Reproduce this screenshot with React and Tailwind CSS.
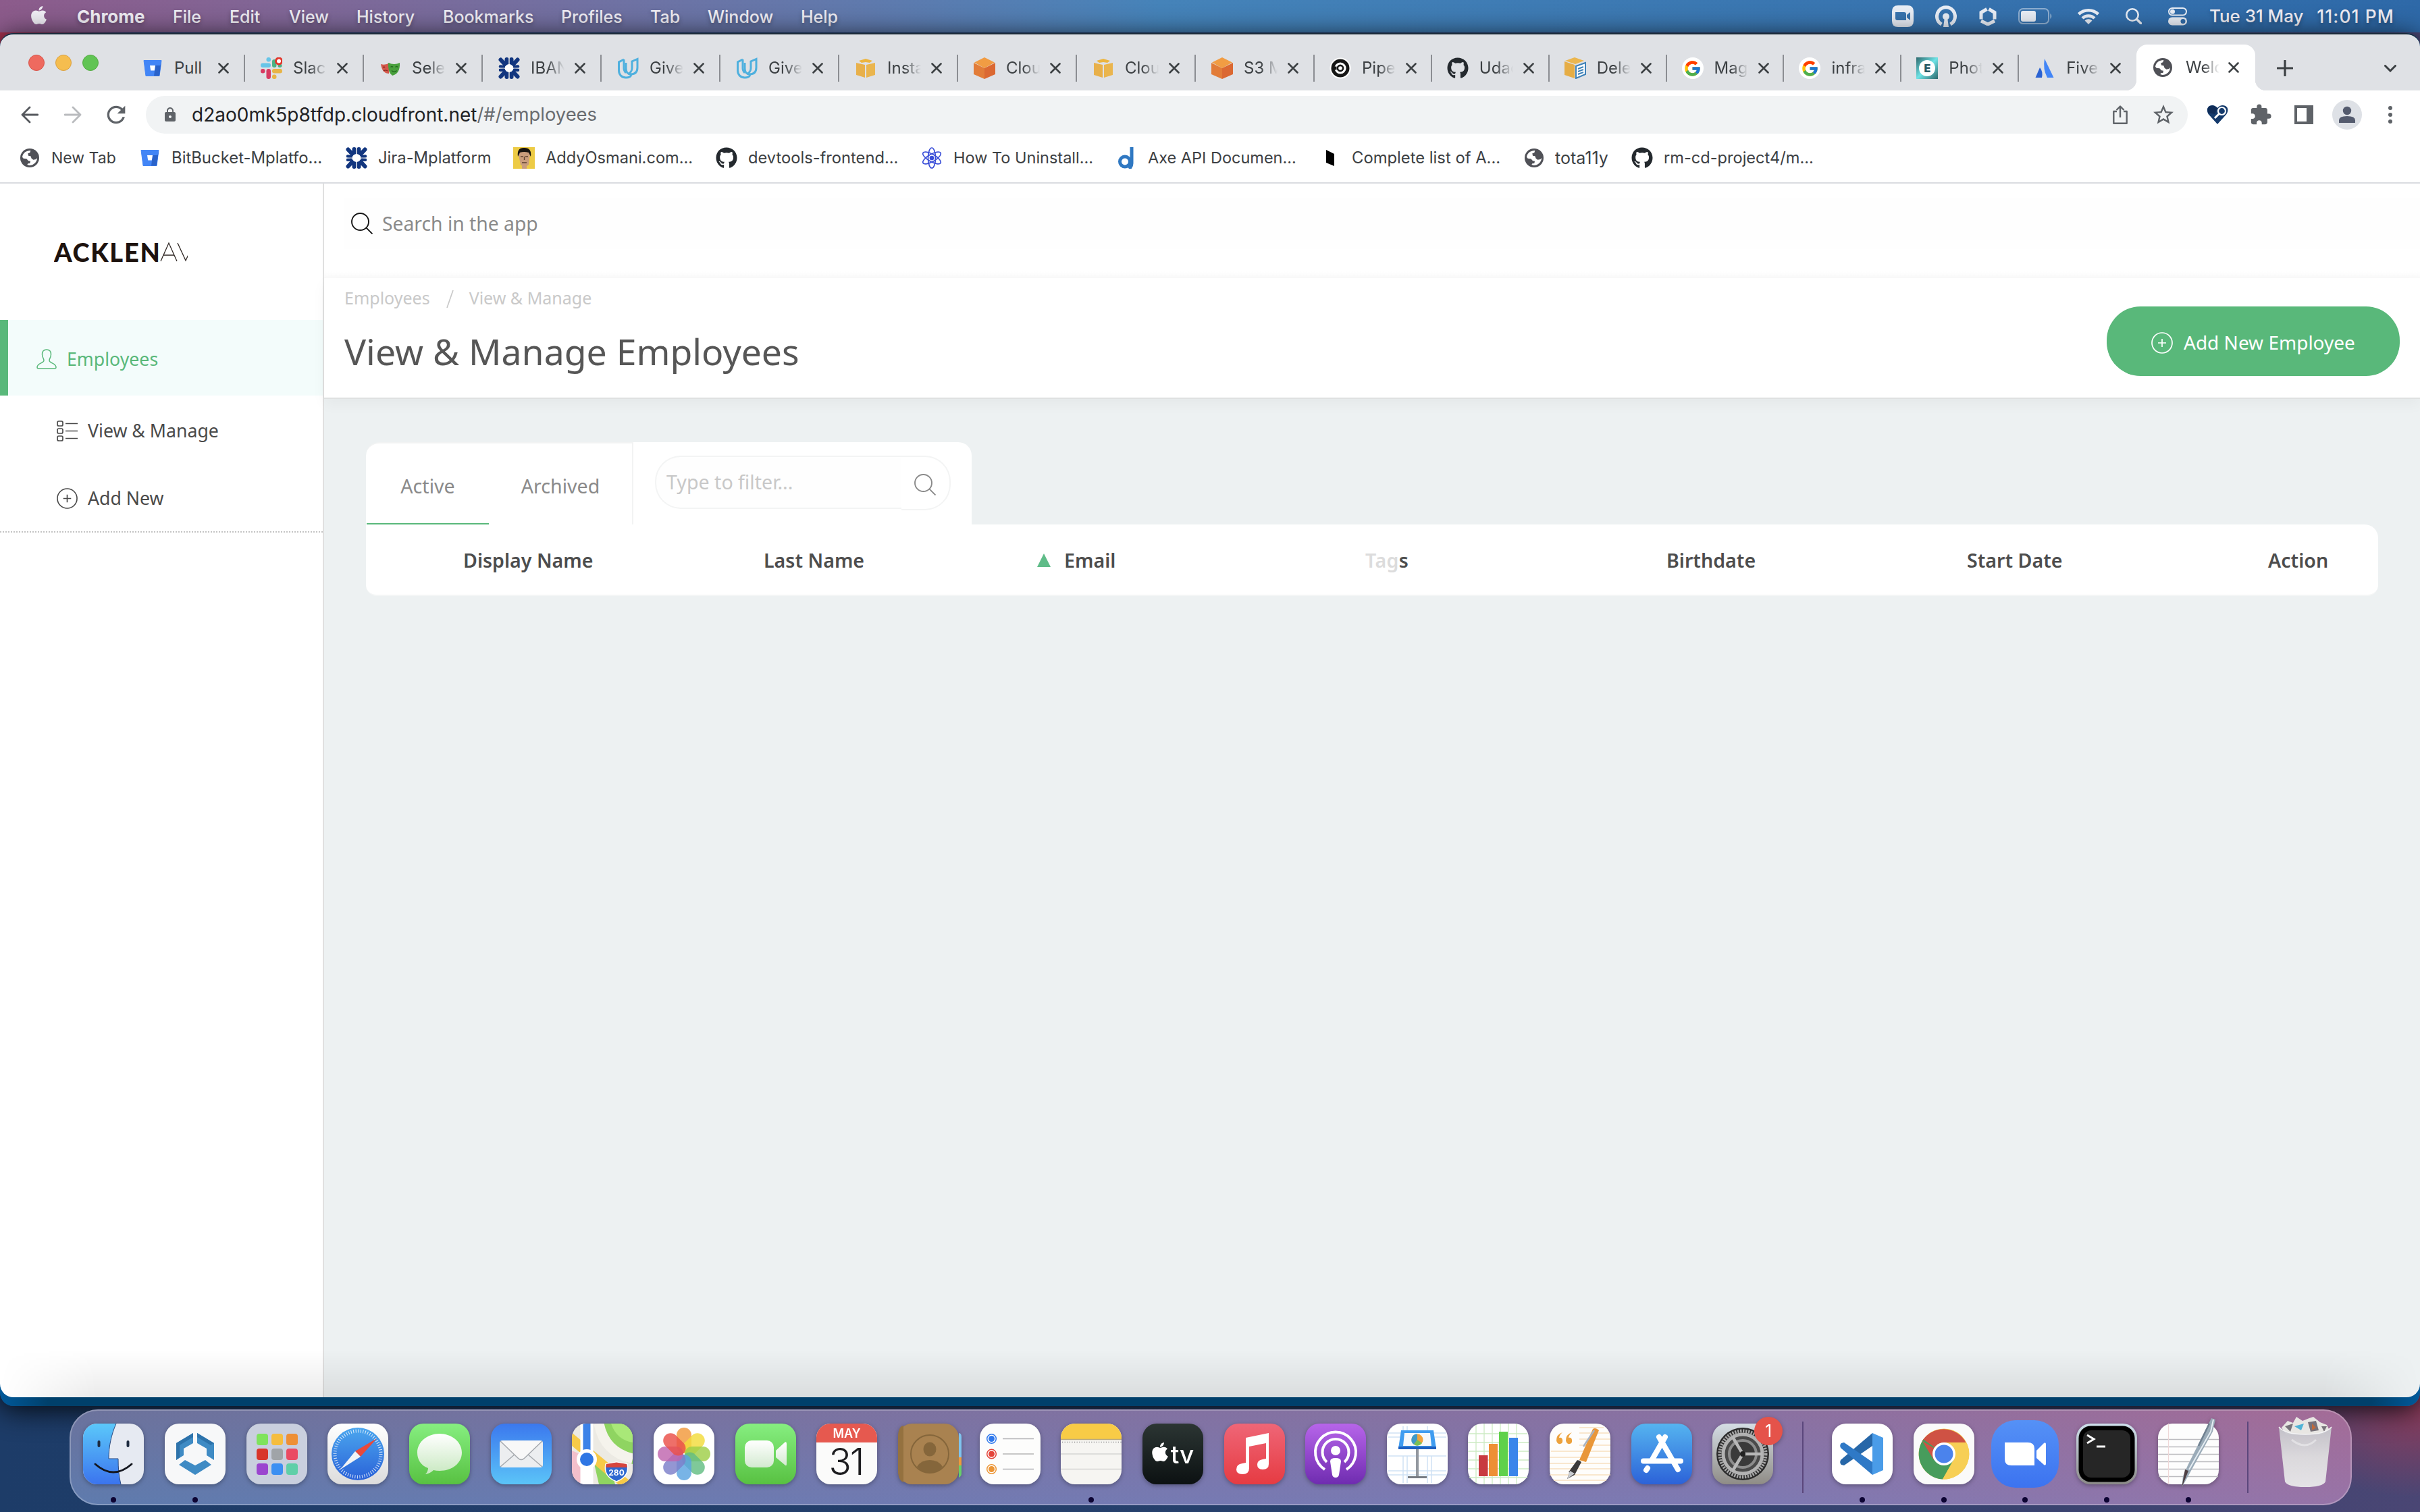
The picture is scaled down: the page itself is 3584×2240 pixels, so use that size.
import React from "react";
import { FaApple, FaGithub } from "react-icons/fa";
import { FcGoogle } from "react-icons/fc";
import { MdExtension, MdStarBorder, MdLock, MdRefresh } from "react-icons/md";

/* ---------- small shared drawings ---------- */

const Lin = ({ id, stops, h }) => (
  <linearGradient id={id} x1="0" y1="0" x2={h ? 1 : 0} y2={h ? 0 : 1}>
    {stops.map((c, i) => (
      <stop key={i} offset={i / (stops.length - 1)} stopColor={c} />
    ))}
  </linearGradient>
);

const Globe = () => (
  <svg viewBox="0 0 84 84" className="size-7 shrink-0">
    <circle cx="42" cy="42" r="42" fill="#505157" />
    <path
      d="M9 38C12 20 26 9 46 9L43 19L34 22L36 32L46 34L50 44L58 50L70 48L75 42C75 60 60 75 40 75L31 72L34 67L43 66L45 56L36 55L28 46L14 44Z"
      fill="#fff"
    />
  </svg>
);

const Bitbucket = () => (
  <svg viewBox="0 0 32 32" className="size-8 shrink-0">
    <path d="M3 4.500H29L26 27.500H6Z" fill="#4285f6" stroke="#4285f6" strokeLinejoin="round" />
    <path d="M29 4.500L26 27.500H18L20 12H27.500Z" fill="#2a62c9" />
    <path d="M12 12H20L18.800 19.500H13.200Z" fill="#fff" />
  </svg>
);

const Slack = () => (
  <svg viewBox="0 0 32 32" className="size-8 shrink-0">
    <g fill="#67c5e8"><rect x="8.500" y="0" width="6.500" height="6.500" rx="3" /><rect x="0" y="8.500" width="15" height="6.500" rx="3.200" /></g>
    <g fill="#4bb385"><rect x="17" y="3" width="6.500" height="12" rx="3.200" /><rect x="25.500" y="9.500" width="6" height="5.500" rx="2.700" /></g>
    <g fill="#d83a62"><rect x="8.500" y="17" width="6.500" height="15" rx="3.200" /><rect x="0" y="17" width="6.500" height="6.500" rx="3" /></g>
    <g fill="#e8b446"><rect x="17" y="17" width="15" height="6.500" rx="3.200" /><rect x="17" y="25.500" width="6.500" height="6.500" rx="3" /></g>
    <circle cx="27" cy="5.500" r="4.500" fill="#fff" stroke="#e2362c" strokeWidth="3" />
  </svg>
);

const Masks = () => (
  <svg viewBox="0 0 32 32" className="size-8 shrink-0">
    <path d="M2 10Q9 12 15 8L14 24Q4 24 2 10Z" fill="#d3584b" />
    <path d="M13 8Q22 12 30 8Q31 24 19 27Q12 22 13 8Z" fill="#49a03d" />
    <path d="M16.500 14.500q2-2 3.500 0M23.500 14.500q2-2 3.500 0M18 19.500q4 4 7.500 0" fill="none" stroke="#256b20" strokeWidth="1.300" />
    <path d="M5 15q2-2 3 0M6 20q3-2 6 0" fill="none" stroke="#7d241c" strokeWidth="1.200" />
  </svg>
);

const Burst = () => (
  <svg viewBox="0 0 32 32" className="size-8 shrink-0">
    <g stroke="#12367f" strokeWidth="6" strokeLinecap="round">
      <path d="M12.500 3V9M19.500 3V9M12.500 29V23M19.500 29V23M3.500 3.500L9.500 10M28.500 3.500L22.500 10M3.500 28.500L9.500 22M28.500 28.500L22.500 22" />
      <path d="M3 13.500L8 14M3 18.800L8 18.500M29 13.500L24 14M29 18.800L24 18.500" strokeWidth="4.500" />
    </g>
    <path d="M0 16H32M16 0V32" stroke="#dfe1e5" strokeWidth="1" />
    <circle cx="16" cy="16" r="6" fill="#fff" />
  </svg>
);

const Udacity = () => (
  <svg viewBox="0 0 32 32" className="size-8 shrink-0" fill="none" stroke="#4fb0de" strokeWidth="3">
    <path d="M10 3L2.500 7V19C2.500 26 7 30 13 30C17 30 20 28.500 21 26" />
    <path d="M13 8V16C13 22 16 25 20 25C27 25 30 21 30 15V2.500L22 6V16C22 20 19 23 17 24" />
    <path d="M10 3V16C10 19 11 21 13 23" />
  </svg>
);

const YellowBox = () => (
  <svg viewBox="0 0 32 32" className="size-8 shrink-0">
    <path d="M6 5L16 2L26 5L22 8L16 7L10 8Z" fill="#edb53f" />
    <path d="M2 8L15 11V30L2 26Z" fill="#e8b04a" />
    <path d="M30 8L17 11V30L30 26Z" fill="#eab54e" />
  </svg>
);

const OrangeCube = () => (
  <svg viewBox="0 0 32 32" className="size-8 shrink-0">
    <path d="M16 0L31 7.500L16 16L1 7.500Z" fill="#f19c43" />
    <path d="M0 8L16 16V32L0 25Z" fill="#e27c38" />
    <path d="M32 8L16 16V32L32 25Z" fill="#db6832" />
  </svg>
);

const Circle = () => (
  <svg viewBox="0 0 32 32" className="size-8 shrink-0">
    <circle cx="16" cy="16" r="15.500" fill="#fff" />
    <circle cx="16" cy="16" r="13.500" fill="#161616" />
    <circle cx="16" cy="16" r="7" fill="none" stroke="#fff" strokeWidth="3.200" />
    <circle cx="16" cy="16" r="2.800" fill="#fff" />
    <rect x="3" y="13.500" width="7.500" height="5" fill="#161616" />
  </svg>
);

const DocCube = () => (
  <svg viewBox="0 0 32 32" className="size-8 shrink-0">
    <path d="M15 0L29 5L16 10L1 5Z" fill="#ebb64f" />
    <path d="M0 6L15 11V31L0 26Z" fill="#e6ad45" />
    <path d="M17 13L31 8V25L17 31Z" fill="#fff" stroke="#3f82b8" strokeWidth="2" />
    <path d="M20 17L28 14M20 21L28 18M20 25L28 22" stroke="#3f82b8" strokeWidth="2" />
  </svg>
);

const GoogleIcon = () => (
  <span className="flex size-8 shrink-0 items-center justify-center rounded-full bg-white">
    <FcGoogle className="size-[27px]" />
  </span>
);

const Edition = () => (
  <span className="flex size-8 shrink-0 items-center justify-center bg-linear-to-br from-[#2f6a6e] via-[#6fe3e6] to-[#2f6a6e]">
    <span className="flex size-6 items-center justify-center rounded-full bg-white text-base font-black leading-none text-[#2a5a63]">E</span>
  </span>
);

const Atlas = () => (
  <svg viewBox="0 0 32 32" className="size-8 shrink-0">
    <path d="M9 15Q14 21 12 30H2.500Z" fill="#2a62d2" />
    <path d="M16 2L29.500 30H20Q13 17 16 2Z" fill="#4285f6" />
  </svg>
);

const Face = () => (
  <svg viewBox="0 0 32 32" className="size-8 shrink-0">
    <path d="M0 0H32V32H0Z" fill="#edcb45" />
    <path d="M8 11Q8 1 16.500 1Q25 1 25 11L23 26Q17 32 11 26Z" fill="#c99c7c" />
    <path d="M7 14Q5 1 16 1Q28 1 26 14L23 8Q16 6 10 8Z" fill="#171310" />
    <path d="M11 14H15M18 14H22M13 23H20M16.500 14V19" stroke="#5c4030" strokeWidth="1.400" />
    <path d="M13 28H20V32H13Z" fill="#c99c7c" />
  </svg>
);

const Atom = () => (
  <svg viewBox="0 0 32 32" className="size-8 shrink-0" fill="none" stroke="#3b4fd8" strokeWidth="1.700">
    <ellipse cx="16" cy="16" rx="5.500" ry="15" />
    <ellipse cx="16" cy="16" rx="5.500" ry="15" transform="rotate(60 16 16)" />
    <ellipse cx="16" cy="16" rx="5.500" ry="15" transform="rotate(120 16 16)" />
    <circle cx="16" cy="16" r="2.500" fill="#3b4fd8" />
  </svg>
);

const Deque = () => (
  <svg viewBox="0 0 32 32" className="size-8 shrink-0" fill="none" stroke="#2f78c2" strokeWidth="5">
    <circle cx="14" cy="21.500" r="7.500" />
    <path d="M24 0V24Q24 29 20 32" />
  </svg>
);

const Slab = () => (
  <svg viewBox="0 0 32 32" className="size-8 shrink-0">
    <path d="M10 4L22 10V28L10 23Z" fill="#000" />
  </svg>
);

const Hub = () => <FaGithub className="size-8 shrink-0 text-[#24292e]" />;

const Cross = () => (
  <svg viewBox="0 0 16 16" className="size-4 shrink-0" stroke="#3c4043" strokeWidth="2.600" strokeLinecap="round">
    <path d="M1.500 1.500L14.500 14.500M14.500 1.500L1.500 14.500" />
  </svg>
);

const Magnifier = ({ className }) => (
  <svg viewBox="0 0 32 32" className={className} fill="none" stroke="currentColor" strokeWidth="1.900">
    <circle cx="13.500" cy="13.500" r="12.500" />
    <path d="M22.300 22.300L31.500 31.500" />
  </svg>
);

const PlusRing = ({ className }) => (
  <svg viewBox="0 0 32 32" className={className} fill="none" stroke="currentColor" strokeWidth="1.700">
    <circle cx="16" cy="16" r="15" />
    <path d="M16 10V22M10 16H22" />
  </svg>
);

/* ---------- menu bar ---------- */

const MENUS = [
  ["Chrome", "w-[142px] font-bold text-[26px]"],
  ["File", "w-[84px]"],
  ["Edit", "w-[88px]"],
  ["View", "w-[100px]"],
  ["History", "w-[128px]"],
  ["Bookmarks", "w-[175px]"],
  ["Profiles", "w-[132px]"],
  ["Tab", "w-[85px]"],
  ["Window", "w-[138px]"],
  ["Help", "w-[80px]"],
];

const MenuBar = () => (
  <header className="flex h-12 shrink-0 items-center bg-linear-to-r from-[#8c5b8b] from-0% via-[#4583b9] via-48% to-[#2e69a8] pl-[42px] pr-[38px] text-[25px] font-medium leading-none text-[#f1eff6] [text-shadow:0_3px_6px_rgba(0,0,0,.3)]">
    <FaApple className="mb-1 size-[31px] shrink-0" />
    <nav className="ml-[41px] flex flex-1 items-baseline pt-0.5">
      {MENUS.map(([t, c]) => (
        <span key={t} className={c}>{t}</span>
      ))}
    </nav>
    <svg viewBox="0 0 32 32" className="size-8">
      <path fillRule="evenodd" d="M9 0H23Q32 0 32 9V23Q32 32 23 32H9Q0 32 0 23V9Q0 0 9 0ZM5 12V19Q5 22 8 22H21V13Q21 10 18 10H5ZM22 14V18L27 22V10Z" fill="#e9eef6" />
    </svg>
    <svg viewBox="0 0 32 32" className="ml-8 size-8" fill="none" stroke="#e9eef6">
      <path d="M9.500 28A13.500 13.500 0 1 1 22.500 28" strokeWidth="5" />
      <circle cx="16" cy="16.500" r="5" fill="#e9eef6" stroke="none" />
      <path d="M14 18H18L20 32H12Z" fill="#e9eef6" stroke="none" />
    </svg>
    <svg viewBox="0 0 26 27" className="ml-[33px] h-[27px] w-[26px]" fill="none" stroke="#e9eef6" strokeWidth="5">
      <path d="M11.500 2.500L3 7.500V17.500M14.500 2.500L23 7.500V17.500M3 20L13 25L23 20" />
    </svg>
    <svg viewBox="0 0 51 24" className="ml-8 h-6 w-[51px]">
      <rect x="1" y="1" width="44" height="22" rx="6" fill="none" stroke="#e9eef6" strokeOpacity=".5" strokeWidth="2" />
      <rect x="4" y="4" width="22" height="16" rx="3" fill="#e9eef6" />
      <path d="M47.500 8Q51 12 47.500 16Z" fill="#e9eef6" opacity=".6" />
    </svg>
    <svg viewBox="0 0 34 24" className="ml-9 h-6 w-[34px]" fill="none" stroke="#e9eef6" strokeWidth="4.500">
      <path d="M2.500 9A21 21 0 0 1 31.500 9M8 15A13 13 0 0 1 26 15" />
      <path d="M11.500 18.500Q17 14 22.500 18.500L17 24Z" fill="#e9eef6" stroke="none" />
    </svg>
    <svg viewBox="0 0 24 24" className="ml-[38px] size-6" fill="none" stroke="#e9eef6" strokeWidth="2.600" strokeLinecap="round">
      <circle cx="10" cy="10" r="8.700" />
      <path d="M16.500 16.500L22.500 22.500" strokeWidth="3.500" />
    </svg>
    <svg viewBox="0 0 28 27" className="ml-[39px] h-[27px] w-7">
      <rect x="1" y="1" width="26" height="10.500" rx="5.200" fill="none" stroke="#e9eef6" strokeWidth="2" />
      <circle cx="6.500" cy="6.200" r="3.500" fill="#e9eef6" />
      <rect y="14.500" width="28" height="12" rx="6" fill="#e9eef6" />
      <circle cx="22" cy="20.500" r="3.500" fill="#2f6aa8" />
    </svg>
    <span className="ml-[33px] w-[155px] text-[25.900px]">Tue 31 May</span>
    <span className="w-[119px] text-right text-[26.400px] tracking-[1.100px]">11:01 PM</span>
  </header>
);

/* ---------- browser chrome ---------- */

const TABS = [
  [Bitbucket, "Pull"],
  [Slack, "Slack"],
  [Masks, "Selen"],
  [Burst, "IBAN"],
  [Udacity, "Give"],
  [Udacity, "Give"],
  [YellowBox, "Insta"],
  [OrangeCube, "Cloud"],
  [YellowBox, "Cloud"],
  [OrangeCube, "S3 M"],
  [Circle, "Pipel"],
  [Hub, "Udac"],
  [DocCube, "Delet"],
  [GoogleIcon, "Mag"],
  [GoogleIcon, "infras"],
  [Edition, "Phot"],
  [Atlas, "Five"],
];

const TabLabel = ({ children }) => (
  <span className="ml-4 w-[50px] shrink-0 overflow-hidden whitespace-nowrap mask-[linear-gradient(to_right,black_50%,transparent)]">{children}</span>
);

const TabStrip = () => (
  <div className="flex h-[83px] shrink-0 bg-[#dfe1e5] text-2xl leading-8 text-[#3c4043]">
    <div className="flex w-[187px] shrink-0 gap-4 pl-[42px] pt-[30px]">
      <i className="size-6 rounded-full border border-[#d8554b] bg-[#ee6a5f]" />
      <i className="size-6 rounded-full border border-[#dba142] bg-[#f5bd4f]" />
      <i className="size-6 rounded-full border border-[#56ab45] bg-[#61c454]" />
    </div>
    {TABS.map(([Icon, label], i) => (
      <div key={i} className={"mt-[30px] flex h-10 shrink-0 items-center " + (i < 10 ? "w-[176px] pl-[23px]" : "w-[173.860px] pl-[22px]") + (i < 16 ? " border-r-2 border-[#8b8d92]" : "")}>
        <Icon />
        {label === "Pull" ? <span className="ml-4 w-[50px]">Pull</span> : <TabLabel>{label}</TabLabel>}
        <span className="ml-[15px]"><Cross /></span>
      </div>
    ))}
    <div className="relative mt-[15px] flex h-[68px] w-[176px] shrink-0 items-center rounded-t-2xl bg-white pl-[25px]">
      <i className="absolute -left-4 bottom-0 size-4 bg-[radial-gradient(circle_at_0_0,transparent_16px,white_16.500px)]" />
      <i className="absolute -right-4 bottom-0 size-4 bg-[radial-gradient(circle_at_100%_0,transparent_16px,white_16.500px)]" />
      <Globe />
      <span className="ml-[20px] w-[50px] overflow-hidden mask-[linear-gradient(to_right,black_50%,transparent)]">Welc</span>
      <span className="ml-[13px]"><Cross /></span>
    </div>
    <svg viewBox="0 0 24 24" className="ml-8 mt-[38px] size-6" stroke="#3c4043" strokeWidth="3.200" strokeLinecap="round">
      <path d="M12 1V23M1 12H23" />
    </svg>
    <svg viewBox="0 0 18 11" className="ml-[135px] mt-[45px] h-[11px] w-[18px]" fill="none" stroke="#3c4043" strokeWidth="3" strokeLinecap="round">
      <path d="M1.500 1.500L9 9L16.500 1.500" />
    </svg>
  </div>
);

const Toolbar = () => (
  <div className="flex h-[72px] shrink-0 items-center bg-white pl-[31px] text-[#5f6368]">
    <svg viewBox="0 0 26 26" className="size-[26px]" fill="none" stroke="#55585d" strokeWidth="2.800" strokeLinecap="round" strokeLinejoin="round">
      <path d="M25 13H2M13 2L2 13L13 24" />
    </svg>
    <svg viewBox="0 0 26 26" className="ml-[38px] size-[26px]" fill="none" stroke="#b9bbbe" strokeWidth="2.800" strokeLinecap="round" strokeLinejoin="round">
      <path d="M1 13H24M13 2L24 13L13 24" />
    </svg>
    <MdRefresh className="ml-[31px] size-10" />
    <div className="ml-[24px] flex h-14 w-[3024px] items-center rounded-full bg-[#f1f3f4] pl-[24px] pr-[18px]">
      <MdLock className="size-6 text-[#5f6368]" />
      <span className="ml-[20px] text-[28px] leading-none text-[#202124]">d2ao0mk5p8tfdp.cloudfront.net</span>
      <span className="flex-1 text-[27.400px] leading-none text-[#696c70]">/#/employees</span>
      <svg viewBox="0 0 22 28" className="h-7 w-[22px]" fill="none" stroke="#5f6368" strokeWidth="2.400" strokeLinejoin="round">
        <path d="M6 9H1.300V26.700H20.700V9H16M11 18V2M5.500 7L11 1.500L16.500 7" />
      </svg>
      <MdStarBorder className="ml-[35px] size-9" />
    </div>
    <svg viewBox="0 0 32 30" className="ml-7 h-[30px] w-8">
      <path d="M16 29L2.500 14Q-1.500 6 4 2Q11-1 16 5Q21-1 28 2Q34 6 29.500 14Z" fill="#143a6c" />
      <path d="M12 14L2 12Q0 4 5 2Q11 0 16 5Z" fill="#0f2c58" />
      <circle cx="22.500" cy="9.500" r="5.500" fill="none" stroke="#fff" strokeWidth="2.200" />
      <path d="M18.500 13.500L12 20" stroke="#fff" strokeWidth="3" />
    </svg>
    <MdExtension className="ml-[31px] size-[34px]" />
    <svg viewBox="0 0 28 28" className="ml-[33px] size-7">
      <path fillRule="evenodd" d="M0 0H28V28H0ZM4 4V24H18V4Z" fill="#5f6368" />
    </svg>
    <svg viewBox="0 0 44 44" className="ml-7 size-11">
      <circle cx="22" cy="22" r="22" fill="#dee1e6" />
      <circle cx="22" cy="16" r="6.200" fill="#545b6e" />
      <path d="M10 34V30Q10 24 22 24Q34 24 34 30V34Z" fill="#545b6e" />
    </svg>
    <svg viewBox="0 0 8 28" className="ml-[38px] h-7 w-2" fill="#5f6368">
      <circle cx="4" cy="4" r="3" /><circle cx="4" cy="14" r="3" /><circle cx="4" cy="24" r="3" />
    </svg>
  </div>
);

const BOOKMARKS = [
  [Globe, "New Tab", "w-[178px] pl-0.5", "ml-[18px] text-[23px]"],
  [Bitbucket, "BitBucket-Mplatfo...", "w-[306px]", "ml-4 text-[23.900px]"],
  [Burst, "Jira-Mplatform", "w-[248px]", "ml-4 text-[23.800px]"],
  [Face, "AddyOsmani.com...", "w-[300px]", "ml-4 text-[23.600px]"],
  [Hub, "devtools-frontend...", "w-[304px]", "ml-4 text-[23.700px]"],
  [Atom, "How To Uninstall...", "w-[288px]", "ml-4 text-[23.500px]"],
  [Deque, "Axe API Documen...", "w-[302px]", "ml-4 text-[23.500px]"],
  [Slab, "Complete list of A...", "w-[302px]", "ml-4 text-[23.800px]"],
  [Globe, "tota11y", "w-[160px] pl-0.5", "ml-[17px] text-[25px]"],
  [Hub, "rm-cd-project4/m...", "w-[320px]", "ml-4 text-[23.600px]"],
];

const BookmarksBar = () => (
  <div className="flex h-[66px] shrink-0 items-start border-b-2 border-[#dadce0] bg-white pl-7 pt-[12px] leading-8 text-[#3c4043]">
    {BOOKMARKS.map(([Icon, label, w, t]) => (
      <div key={label} className={"flex h-8 shrink-0 items-center whitespace-nowrap " + w}>
        <Icon />
        <span className={t}>{label}</span>
      </div>
    ))}
  </div>
);

/* ---------- web page ---------- */

const Sidebar = () => (
  <aside className="flex w-[480px] shrink-0 flex-col border-r-2 border-[#e0e0e0] bg-white text-[26.700px] text-[#4a4a4a]">
    <div className="flex h-[202px] items-center pl-[80px]">
      <div className="flex w-[198px] items-center overflow-hidden whitespace-nowrap font-['Lato'] text-[38px] leading-none text-[#1d120e]">
        <span className="font-black tracking-[1.700px]">ACKLEN</span>
        <svg viewBox="0 0 44 28" className="-ml-0.5 h-7 w-11 shrink-0 overflow-visible" fill="none" stroke="#2e2623" strokeWidth="1.300">
          <path d="M1 28L13 1L25 28M5 19H21M26 1L38 27L50 1" />
        </svg>
      </div>
    </div>
    <div className="flex h-[112px] items-center border-l-[12px] border-[#59b87a] bg-[#f3fcfb] pl-[42px] text-[#59b87a]">
      <svg viewBox="0 0 30 30" className="mt-1 size-[30px]" fill="none" stroke="currentColor" strokeWidth="1.500">
        <path d="M15 1C10.500 1 8.500 4 8.500 8C8.500 13 11 14 11 17C11 21 1 21 1 27Q1 29 3 29H27Q29 29 29 27C29 21 19 21 19 17C19 14 21.500 13 21.500 8C21.500 4 19.500 1 15 1Z" />
      </svg>
      <span className="ml-[15px] pt-1">Employees</span>
    </div>
    <div className="flex h-[102px] items-center pl-[84px]">
      <svg viewBox="0 0 31 31" className="mt-0.5 size-[31px]" fill="none" stroke="currentColor" strokeWidth="1.700">
        <rect x="1" y="1" width="8" height="7" rx="2" /><rect x="1" y="12" width="8" height="7" rx="2" /><rect x="1" y="23" width="8" height="7" rx="2" />
        <path d="M13 4.500H31M13 15.500H31M13 26.500H31" />
      </svg>
      <span className="ml-[15px] pt-0.5">View &amp; Manage</span>
    </div>
    <div className="flex h-[101px] items-center border-b-2 border-dotted border-[#c4c4c4] pl-[84px]">
      <PlusRing className="mt-0.5 size-[31px]" />
      <span className="ml-[15px] pt-0.5">Add New</span>
    </div>
  </aside>
);

const PageHeader = () => (
  <div className="flex h-[179px] shrink-0 justify-between border-b-2 border-[#dfe1e1] bg-white pl-[30px] pr-[30px] shadow-[0_8px_20px_rgba(0,0,0,.04)]">
    <div>
      <div className="mt-3 flex text-[25px] leading-[34px] text-[#c9c9c9]">
        <span>Employees</span>
        <svg viewBox="0 0 11 26" className="ml-[24px] mt-1.5 h-[26px] w-[11px]" stroke="#c9c9c9" strokeWidth="1.700"><path d="M10 0L1 26" /></svg>
        <span className="ml-[23px]">View &amp; Manage</span>
      </div>
      <h1 className="mt-[33px] whitespace-nowrap text-[53.500px] leading-[60px] text-[#565656]">View &amp; Manage Employees</h1>
    </div>
    <button className="mt-[42px] flex h-[103px] w-[434px] items-center rounded-[50px] bg-[#59b87a] pl-[66px] text-[28px] text-white">
      <PlusRing className="mt-1 size-8" />
      <span className="ml-4 pt-0.5">Add New Employee</span>
    </button>
  </div>
);

const Filter = () => (
  <div className="flex h-[122px] w-[501px] items-start rounded-tr-[20px] bg-white pl-8 pt-5">
    <div className="flex h-[79px] w-[365px] items-center rounded-l-[38px] border-2 border-r-0 border-[#f3f4f4] bg-[#fefefe] pl-[15px] text-[28.600px] text-[#c8c8c8]">
      Type to filter...
    </div>
    <div className="flex h-[81px] w-[73px] items-center rounded-r-[38px] border-2 border-l-0 border-[#f3f4f4] pl-[19px] pt-1">
      <Magnifier className="size-8 text-[#8a8a8a]" />
    </div>
  </div>
);

const Employees = () => (
  <section className="flex flex-col pl-[62px] pt-16">
    <div className="flex">
      <div className="flex rounded-tl-[20px] border-r-2 border-t-2 border-[#f2f3f3] bg-white pl-px text-[28.600px] text-[#8a8a8a]">
        <div className="flex h-[120px] w-[181px] items-center justify-center border-b-2 border-[#59b87a] pt-2">Active</div>
        <div className="flex h-[120px] w-[212px] items-center justify-center pt-1.5">Archived</div>
      </div>
      <Filter />
    </div>
    <div className="flex h-[106px] w-[2980px] items-center whitespace-nowrap rounded-b-2xl rounded-tr-[20px] border-b-2 border-[#f4f6f6] bg-white pl-[144px] pt-0.5 text-[28.600px] font-semibold text-[#4d4d4d]">
      <span className="w-[445px]">Display Name</span>
      <span className="w-[405px]">Last Name</span>
      <span className="flex w-[486px] items-center">
        <svg viewBox="0 0 20 20" className="mr-[20px] size-5"><path d="M10 0L20 20H0Z" fill="#5fbc88" /></svg>
        Email
      </span>
      <span className="w-[446px] tracking-[0.400px]"><span className="text-[#dcdcdc]">Tag</span>s</span>
      <span className="w-[445px]">Birthdate</span>
      <span className="w-[446px]">Start Date</span>
      <span>Action</span>
    </div>
  </section>
);

const WebPage = () => (
  <div className="flex flex-1 font-['Noto_Sans',sans-serif]">
    <Sidebar />
    <main className="flex flex-1 flex-col bg-[#edf1f2]">
      <div className="flex h-[140px] shrink-0 items-start bg-linear-to-b from-white from-93% to-[#fafafa] pt-[21px]">
        <label className="ml-[30px] flex h-[76px] w-full items-center bg-[#fefefe] pl-2.5 text-[28.300px] text-[#8a8a8a]">
          <Magnifier className="size-8 text-[#161616]" />
          <span className="ml-3.5">Search in the app</span>
        </label>
      </div>
      <PageHeader />
      <Employees />
    </main>
  </div>
);

/* ---------- dock icons (90 x 90 artboards) ---------- */

const Tile = ({ children, fill = "#fff", className = "" }) => (
  <svg viewBox="0 0 90 90" className={"size-[90px] overflow-visible drop-shadow-[0_2px_3px_rgba(0,0,0,.3)] " + className}>
    <clipPath id="tile"><rect width="90" height="90" rx="21" /></clipPath>
    <rect width="90" height="90" rx="21" fill={fill} />
    {children}
  </svg>
);

const Finder = () => (
  <Tile fill="#e6eaf2">
    <defs><Lin id="fi" stops={["#5bc8fa", "#3b74ee"]} /></defs>
    <path d="M49 0C42 16 38 34 38 52H52C52 66 53 78 56 90H0V0Z" fill="url(#fi)" clipPath="url(#tile)" />
    <path d="M49 0C42 16 38 34 38 52H52C52 66 53 78 56 90" fill="none" stroke="#2a4a80" strokeWidth="1" />
    <path d="M23.500 27V33M66.500 27V33" stroke="#1d2b40" strokeWidth="4" strokeLinecap="round" />
    <path d="M18 60Q45 84 72 60" fill="none" stroke="#14171f" strokeWidth="3" strokeLinecap="round" />
  </Tile>
);

const HexApp = () => (
  <Tile fill="#f7f8f9">
    <path d="M42 14L17 29V54L28 47V37L42 29ZM48 14L73 29V54L62 47V37L48 29ZM21 61L45 76L69 61L60 54L45 62L30 54Z" fill="#3f8bc4" />
    <path d="M42 14L17 29V54L22 50V32L42 20ZM48 14L73 29L68 32L48 20Z" fill="#2d73ab" />
  </Tile>
);

const PAD = ["#7fe35c", "#f5bd3f", "#ee8f35", "#d8352a", "#a0a4a8", "#ea4a63", "#9b45cf", "#3c8ff2", "#5fcfa8"];
const Launchpad = () => (
  <Tile fill="#c9cfde">
    {PAD.map((c, i) => (
      <rect key={i} x={15 + (i % 3) * 22} y={15 + Math.floor(i / 3) * 22} width="17" height="17" rx="4" fill={c} />
    ))}
  </Tile>
);

const Safari = () => (
  <Tile fill="url(#sa0)">
    <defs><Lin id="sa0" stops={["#ffffff", "#dcdcdc"]} /><Lin id="sa" stops={["#4ba6ee", "#2a62d8"]} /></defs>
    <circle cx="45" cy="45" r="39" fill="url(#sa)" />
    <circle cx="45" cy="45" r="34" fill="none" stroke="#fff" strokeOpacity=".8" strokeWidth="5" strokeDasharray="1 2.560" />
    <path d="M73 22L49 49L41 41Z" fill="#e9493b" />
    <path d="M19 68L41 41L49 49Z" fill="#f1f3f5" />
  </Tile>
);

const Messages = () => (
  <Tile fill="url(#me)">
    <defs><Lin id="me" stops={["#86ee80", "#58c142"]} /><Lin id="me2" stops={["#ffffff", "#c8e8c0"]} /></defs>
    <path d="M45 15C63 15 78 27 78 43C78 59 63 70 45 70Q40 70 36 69Q31 74 24 75Q28 71 28 66C17 62 12 53 12 43C12 27 27 15 45 15Z" fill="url(#me2)" />
  </Tile>
);

const Mail = () => (
  <Tile fill="url(#ma)">
    <defs><Lin id="ma" stops={["#3b78ee", "#5bc4f8"]} /></defs>
    <rect x="13" y="25" width="64" height="40" rx="4" fill="#eceef0" />
    <path d="M14 64L36 45M76 64L54 45" stroke="#a5a9ae" strokeWidth="1.500" />
    <path d="M14 26L40 51Q45 56 50 51L76 26" fill="#f8f8f8" stroke="#a5a9ae" strokeWidth="1.500" />
  </Tile>
);

const Maps = () => (
  <Tile fill="#eceae3">
    <g clipPath="url(#tile)">
      <path d="M40 0H90V60Q52 50 40 0Z" fill="#8fd461" />
      <path d="M58 0H90V28Q66 24 58 0Z" fill="#a9e878" />
      <path d="M40 0Q48 42 90 52" fill="none" stroke="#f5f3ec" strokeWidth="15" />
      <path d="M30 46Q56 58 64 90H40Z" fill="#8fd461" />
      <path d="M0 40V90H14V46Z" fill="#f3bfcb" />
      <path d="M-4 20L90 98" stroke="#f7ca48" strokeWidth="15" />
      <path d="M22 0V90" stroke="#fff" strokeWidth="19" />
      <path d="M22 0V40" stroke="#3c82e8" strokeWidth="11" />
    </g>
    <circle cx="22" cy="53" r="15" fill="#fff" />
    <circle cx="22" cy="53" r="10" fill="#2f76e4" />
    <path d="M50 60L66 57L82 60Q86 78 66 86Q46 78 50 60Z" fill="#2d68d0" stroke="#fff" strokeWidth="1.500" />
    <path d="M51 60L66 57.500L81 60L82 65H50Z" fill="#d6453c" />
    <text x="66" y="77" textAnchor="middle" fontSize="12" fontWeight="700" fill="#fff">280</text>
  </Tile>
);

const PETALS = ["#f2993a", "#f3dc3c", "#9fce48", "#63bd83", "#5aa3e0", "#7d7fc9", "#c065ae", "#ea4f48"];
const Photos = () => (
  <Tile>
    {PETALS.map((c, i) => (
      <rect key={i} x="34" y="6" width="22" height="38" rx="11" fill={c} opacity=".82" transform={`rotate(${i * 45} 45 45)`} />
    ))}
  </Tile>
);

const FaceTime = () => (
  <Tile fill="url(#me)">
    <defs><Lin id="ft" stops={["#ffffff", "#d3ead0"]} /></defs>
    <rect x="14" y="25" width="43" height="40" rx="10" fill="url(#ft)" />
    <path d="M60 40L73 28Q76 26 76 30V60Q76 64 73 61L60 50Z" fill="url(#ft)" />
  </Tile>
);

const Calendar = () => (
  <Tile fill="#fbfbfa">
    <path d="M0 0H90V28H0Z" fill="#e6594f" clipPath="url(#tile)" />
    <text x="45" y="21" textAnchor="middle" fontSize="18" fontWeight="600" fill="#fff">MAY</text>
    <text x="44" y="76" textAnchor="middle" fontSize="55" fontWeight="300" letterSpacing="-2" fill="#1d1d1f">31</text>
  </Tile>
);

const Contacts = () => (
  <Tile fill="#a98250">
    <path d="M90 14Q94 14 94 20V32H90ZM90 32H94V50H90Z" fill="#7fc3ee" />
    <path d="M90 50H94V62H90Z" fill="#ef9a3a" /><path d="M90 62H94V74Q94 78 90 80Z" fill="#67cf6a" />
    <path d="M0 21Q0 4 8 3V87Q0 84 0 69Z" fill="#94713f" />
    <circle cx="47" cy="45" r="28" fill="none" stroke="#85663b" strokeWidth="2" />
    <ellipse cx="47" cy="38" rx="9.500" ry="10.500" fill="#85663b" />
    <path d="M28 64Q34 54 47 54Q60 54 66 64Q58 73 47 73Q36 73 28 64Z" fill="#85663b" />
  </Tile>
);

const Reminders = () => (
  <Tile fill="#fdfdfc">
    {["#2f78ec", "#e4453a", "#ec9535"].map((c, i) => (
      <g key={c}>
        <circle cx="17.500" cy={22.5 + i * 22.5} r="6.800" fill="#fff" stroke={c} strokeWidth="1.500" />
        <circle cx="17.500" cy={22.5 + i * 22.5} r="4.500" fill={c} />
        <path d={`M34 ${22.5 + i * 22.5}H80`} stroke="#b4b4b6" strokeWidth="1.500" />
      </g>
    ))}
  </Tile>
);

const Notes = () => (
  <Tile fill="#f6f5f2">
    <path d="M0 0H90V23H0Z" fill="#f8cb46" clipPath="url(#tile)" />
    <path d="M0 23.500H90" stroke="#b9a878" strokeWidth="1.500" />
    <path d="M2 27.500H90" stroke="#8f8f8f" strokeWidth="1.500" strokeDasharray="1.200 2.400" />
    <path d="M0 45H90M0 67.500H90" stroke="#d5d5d3" strokeWidth="1.500" />
  </Tile>
);

const Tv = () => (
  <Tile fill="url(#tv)">
    <defs><Lin id="tv" stops={["#2b3533", "#0c1112"]} /></defs>
    <FaApple x="10" y="26" size="32" color="#fff" />
    <text x="59" y="59" textAnchor="middle" fontSize="37" fontWeight="500" fill="#fff">tv</text>
  </Tile>
);

const Music = () => (
  <Tile fill="url(#mu)">
    <defs><Lin id="mu" stops={["#ef6677", "#e63b42"]} /></defs>
    <path d="M32 21L66 14V60Q66 68 57 68Q49 68 49 61Q49 54 57 53L62 52V29L37 34V66Q37 75 27 75Q18 75 18 68Q18 60 27 59L32 58Z" fill="#fff" />
  </Tile>
);

const Podcasts = () => (
  <Tile fill="url(#po)">
    <defs><Lin id="po" stops={["#b765ea", "#6f2cb0"]} /></defs>
    <g fill="none" stroke="#fff" strokeWidth="4">
      <path d="M29 68A30 30 0 1 1 61 68" /><path d="M32 57A19.500 19.500 0 1 1 58 57" />
    </g>
    <circle cx="45" cy="40" r="7" fill="#fff" />
    <path d="M37 56Q37 51 45 51Q53 51 53 56L50 76Q49 80 45 80Q41 80 40 76Z" fill="#fff" />
  </Tile>
);

const Keynote = () => (
  <Tile>
    <path d="M2 14H88M2 20H88M2 48H88M2 70H88M2 76H88M24 4V14M30 4V14M60 4V14M24 48V88M30 48V88M60 48V88M66 48V88" stroke="#cfe2f5" strokeWidth="1.500" fill="none" />
    <path d="M21 10H69L73 37H17Z" fill="#3f9cf0" />
    <path d="M26 14H64L66 33H24Z" fill="#f5f8fb" />
    <circle cx="45" cy="24" r="8.500" fill="#f0a33c" /><path d="M45 24V15.500A8.500 8.500 0 0 0 40 31Z" fill="#3f9ac9" /><path d="M45 24L40 31A8.500 8.500 0 0 0 52 29Z" fill="#79c157" />
    <path d="M17 34H73V38H17Z" fill="#1d5fc0" />
    <path d="M45 38V79" stroke="#93989f" strokeWidth="4" /><path d="M31 78H59V81H31Z" fill="#777c83" />
  </Tile>
);

const Numbers = () => (
  <Tile>
    <path d="M12 2V88M24 0V90M36 0V90M48 0V90M60 0V90M72 0V90M2 15H88M0 28H90M0 41H90M0 54H90M0 67H90M2 80H88" stroke="#cdebc4" strokeWidth="1.300" />
    <rect x="16" y="47" width="13.500" height="31" fill="#c83a40" /><rect x="31" y="30" width="13" height="48" fill="#ee9035" />
    <rect x="46" y="12" width="13" height="66" fill="#5fd14a" /><rect x="61" y="21" width="13" height="57" fill="#3a86ea" />
  </Tile>
);

const Pages = () => (
  <Tile fill="#fefdfb">
    <path d="M44 6H80M44 14H88M44 23H90M44 32H90M2 41H90M0 50H90M0 59H90M0 67H90M0 76H90M6 84H84" stroke="#f7dfc0" strokeWidth="1.500" />
    <path d="M19 13Q10 16 10 25Q11 31 16 30Q20 29 19 24Q18 20 14 21Q15 16 19 13ZM33 13Q24 16 24 25Q25 31 30 30Q34 29 33 24Q32 20 28 21Q29 16 33 13Z" fill="#eda23c" />
    <path d="M64 8Q68 5 73 10L54 57L44 54Z" fill="#e9973a" />
    <path d="M66 10L50 34" stroke="#a8b4c4" strokeWidth="2.500" />
    <path d="M41 54L46 57L36 74L28 72Z" fill="#333" />
    <path d="M43 54L47 57L37 76L26 82L30 70Z" fill="#3c3a3a" /><path d="M30 70L37 74L26 82Z" fill="#c9ccd0" />
  </Tile>
);

const AppStore = () => (
  <Tile fill="url(#as)">
    <defs><Lin id="as" stops={["#55b4f0", "#2c62d8"]} /></defs>
    <g stroke="#fff" strokeWidth="8" strokeLinecap="round">
      <path d="M50 20L31 53M41 20L69 68M18 55.500H73M24 66L22 69" />
    </g>
  </Tile>
);

const Settings = () => (
  <Tile fill="url(#se)">
    <defs><Lin id="se" stops={["#d4dde4", "#8f8c86"]} /></defs>
    <circle cx="45" cy="45" r="39" fill="#2b2b2b" />
    <circle cx="45" cy="45" r="34" fill="none" stroke="#a5a5a5" strokeWidth="5" strokeDasharray="2.400 1.600" />
    <circle cx="45" cy="45" r="29" fill="#4a4a4a" stroke="#b2b2b2" strokeWidth="5" />
    <circle cx="45" cy="45" r="20" fill="#3a3a3a" stroke="#8d8d8d" strokeWidth="4" />
    <path d="M45 45H74M45 45L30 20M45 45L30 70" stroke="#b8b8b8" strokeWidth="4.500" />
    <circle cx="45" cy="45" r="4" fill="#222" />
    <circle cx="83" cy="11" r="21" fill="#e5534a" />
    <text x="83" y="20" textAnchor="middle" fontSize="25" fontWeight="400" fill="#fff">1</text>
  </Tile>
);

const VsCode = () => (
  <Tile>
    <path d="M60 14L13 54Q11 58 14 61L18 62L60 33Z" fill="#2767a8" />
    <path d="M60 76L13 36Q11 32 14 29L18 28L60 57Z" fill="#2f79c6" />
    <path d="M60 14L76 21V69L60 76Z" fill="#4a9ce8" />
  </Tile>
);

const Chrome = () => (
  <Tile fill="#fafafa">
    <circle cx="45" cy="45" r="37.500" fill="#f7cf55" />
    <path d="M45 45L12.500 26A37.500 37.500 0 0 1 77.500 28H45Z" fill="#cf5244" />
    <path d="M45 45L14.500 23.500A37.500 37.500 0 0 0 43 82.500L59 54Z" fill="#479c5c" />
    <path d="M45 45L13 26L30 54Z" fill="#cf5244" />
    <path d="M45 28H78A37.500 37.500 0 0 1 43 82.500L60 53Z" fill="#f7cf55" />
    <circle cx="45" cy="45" r="17" fill="#fff" /><circle cx="45" cy="45" r="13.500" fill="#4b83ec" />
  </Tile>
);

const Zoom = () => (
  <svg viewBox="0 0 100 100" className="-m-[5px] size-[100px]">
    <defs><Lin id="zo" stops={["#5591f6", "#3c73f0"]} /></defs>
    <rect width="100" height="100" rx="36" fill="url(#zo)" />
    <path d="M20 33H54Q64 33 64 42V67H30Q20 67 20 58Z" fill="#fff" />
    <path d="M67 45L78 34Q81 32 81 36V64Q81 68 78 66L67 56Z" fill="#fff" />
  </svg>
);

const Terminal = () => (
  <Tile fill="url(#te)">
    <defs><Lin id="te" stops={["#cfe0ec", "#8b8a88"]} /></defs>
    <rect x="3.500" y="3.500" width="83" height="83" rx="18" fill="#000" />
    <rect x="10" y="10" width="70" height="70" rx="12" fill="#262626" />
    <path d="M16 17L26 23L16 29M30 34H43" fill="none" stroke="#fff" strokeWidth="3" />
  </Tile>
);

const TextEdit = () => (
  <Tile fill="#fdfdfd">
    <path d="M0 23.500H90M0 34.500H90M0 45.500H90M0 56.500H90M0 67.500H90M1 78.500H89" stroke="#bcbcc0" strokeWidth="1.600" />
    <path d="M15.500 0V90" stroke="#efd8d8" strokeWidth="1.200" />
    <path d="M79-8L85-6L81 12L50 68L35 95L37 78L44 62Z" fill="#9aabb8" />
    <path d="M82-6L78 12L46 68" fill="none" stroke="#e5edf3" strokeWidth="2" />
    <path d="M76 0L60 33" stroke="#6f8090" strokeWidth="2.500" />
    <path d="M45 70L35 95L40 68Z" fill="#4f4044" />
  </Tile>
);

const Trash = () => (
  <svg viewBox="0 0 80 104" className="-mt-2.5 mr-[7px] h-[104px] w-20">
    <defs><Lin id="tr" stops={["#c4c4ca", "#dededf", "#e9e9ea"]} /></defs>
    <path d="M5 16L14 6L22 9L27 0L36 6L46 2L52 0L62 8L72 12L75 18L66 26H12Z" fill="#e8e6e3" />
    <path d="M10 14L22 10L18 22ZM44 8L56 6L60 20L48 22ZM64 14L72 14L68 22Z" fill="#77727a" />
    <path d="M24 14L38 10L34 20Z" fill="#4fb3d6" /><path d="M50 10L56 16L50 20Z" fill="#bf6a3c" />
    <path d="M1 15Q10 26 40 26Q70 26 79 15L70 96Q66 104 40 104Q14 104 10 96Z" fill="url(#tr)" fillOpacity=".95" />
    <path d="M1 15Q10 26 40 26Q70 26 79 15" fill="none" stroke="#f3f3f5" strokeWidth="1.500" />
    <path d="M20 34Q40 50 56 34" stroke="#fff" strokeOpacity=".4" strokeWidth="3" fill="none" />
  </svg>
);

const DOCK_LEFT = [
  [Finder, true], [HexApp, true], [Launchpad], [Safari], [Messages], [Mail], [Maps], [Photos], [FaceTime], [Calendar],
  [Contacts], [Reminders], [Notes, true], [Tv], [Music], [Podcasts], [Keynote], [Numbers], [Pages], [AppStore], [Settings],
];
const DOCK_RIGHT = [[VsCode, true], [Chrome, true], [Zoom, true], [Terminal, true], [TextEdit, true]];

const DockItem = ({ Icon, open }) => (
  <div className="flex w-[120.660px] shrink-0 flex-col items-center pt-[19px]">
    <Icon />
    {open && <i className="mt-[19px] size-2 rounded-full bg-[#0d0433]" />}
  </div>
);

const Divider = () => (
  <div className="flex w-14 shrink-0 justify-center pt-4">
    <i className="h-[106px] w-0.5 bg-[#5b477c]" />
  </div>
);

const Dock = () => (
  <footer className="ml-[103px] mt-[5px] h-[142px] w-[3380px] rounded-[42px] bg-[linear-gradient(to_bottom,rgba(150,90,120,.22),rgba(90,130,200,.22)),linear-gradient(to_right,#5f79a6,#7079ab_28%,#7e78ad_50%,#8877ac_75%,#a8709f)]">
    <div className="flex h-full rounded-[42px] border-2 border-white/25 pl-[3px]">
      {DOCK_LEFT.map(([Icon, open], i) => <DockItem key={i} Icon={Icon} open={open} />)}
      <Divider />
      {DOCK_RIGHT.map(([Icon, open], i) => <DockItem key={i} Icon={Icon} open={open} />)}
      <Divider />
      <DockItem Icon={Trash} />
    </div>
  </footer>
);

/* ---------- desktop ---------- */

export default function App() {
  return (
    <div className="flex h-[2240px] w-[3584px] flex-col overflow-hidden bg-[radial-gradient(circle_at_0_50px,#a8324f,transparent_200px),radial-gradient(ellipse_at_100%_2090px,#8a3c5c,transparent_220px),linear-gradient(to_right,#1d3c68,#26406c_50%,#3a4370_85%,#4a4674)] font-['Inter',sans-serif]">
      <MenuBar />
      <div className="mt-px flex h-[2034px] shrink-0 flex-col rounded-[20px] bg-[linear-gradient(to_right,#00599a,#00406b_2%,#00406b_98%,#00599a)] pb-[13px] shadow-[0_6px_40px_rgba(0,0,0,.85)]">
        <div className="relative flex flex-1 flex-col overflow-hidden rounded-[20px] border-t-2 border-[#1b2a3a]">
          <TabStrip />
          <Toolbar />
          <BookmarksBar />
          <WebPage />
          <div className="pointer-events-none absolute inset-x-0 bottom-0 h-[70px] bg-linear-to-b from-transparent to-black/8 mask-[linear-gradient(to_right,transparent,black_4%,black_96%,transparent)]" />
        </div>
      </div>
      <Dock />
    </div>
  );
}
